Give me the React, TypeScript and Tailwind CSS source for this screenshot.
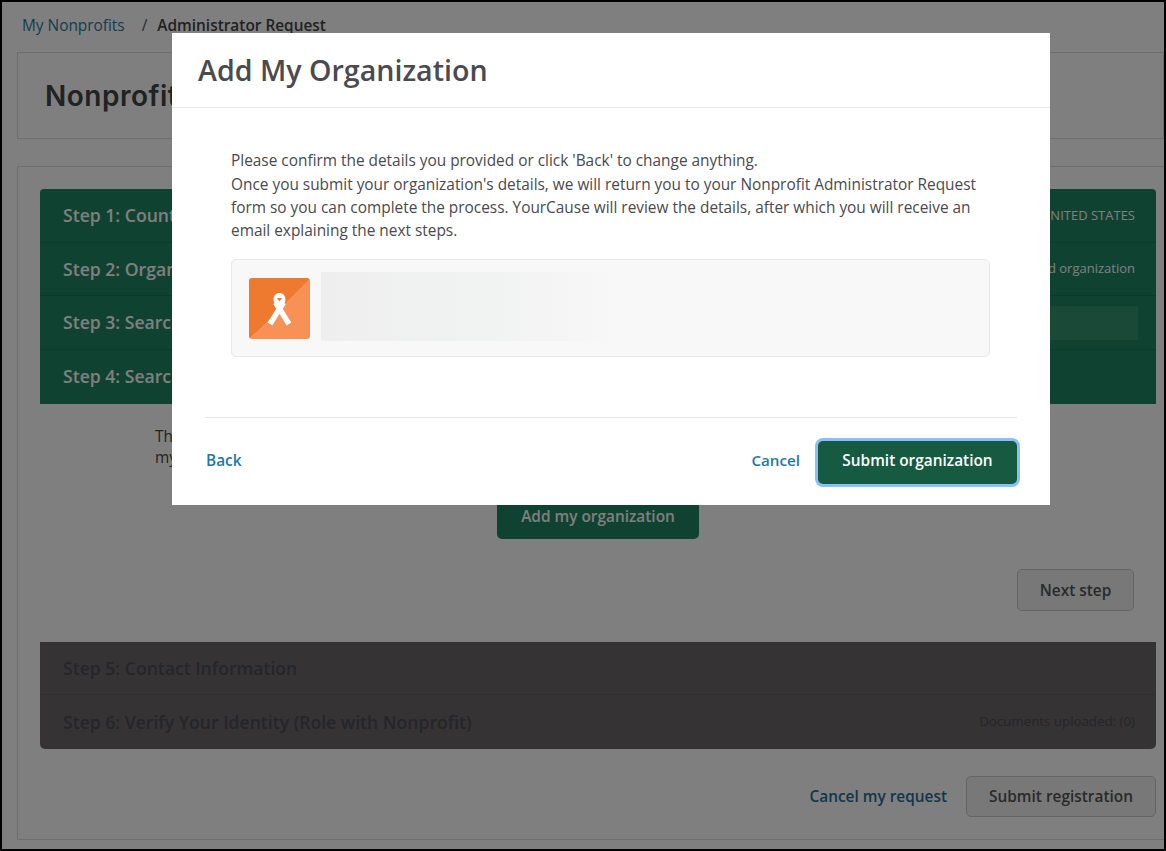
import React from 'react';

const font = "font-['Open_Sans',sans-serif]";

const StepRow: React.FC<{ title: string; right?: React.ReactNode; className?: string }> = ({ title, right, className = '' }) => (
  <div className={`flex items-center justify-between pl-[23px] pr-[21px] ${className}`}>
    <span className="text-[17.6px] font-semibold whitespace-nowrap">{title}</span>
    {right}
  </div>
);

const RibbonIcon: React.FC = () => (
  <div className="w-[61px] h-[61px] mt-px shrink-0 rounded-[3px] bg-[linear-gradient(135deg,#ee7a2f_50%,#f89155_50%)] flex items-center justify-center">
    <svg width="61" height="61" viewBox="0 0 61 61" fill="none">
      <path d="M21 46 L34.4 24.5 M40 46 L26.6 24.5" stroke="#fff" strokeWidth="5.4" />
      <path d="M24.6 21.5 C24.6 17.5 27 15 30.5 15 C34 15 36.4 17.5 36.4 21.5 C36.4 24 35.5 26 33.5 28 L27.5 28 C25.5 26 24.6 24 24.6 21.5 Z" fill="#fff" />
      <path d="M28 20h5l-2.5 3.4z" fill="#ee7a2f" />
    </svg>
  </div>
);

const App: React.FC = () => {
  return (
    <div className={`${font} relative w-[1166px] h-[851px] overflow-hidden bg-white text-[#333]`}>
      {/* Page behind the dialog */}
      <div className="h-full flex flex-col border-2 border-black">
        <div className="h-[50px] pl-[20px] pt-[14px] flex items-start text-[15.4px] leading-[20px] whitespace-nowrap">
          <span className="text-[#2a7a9f]">My Nonprofits</span>
          <span className="ml-[17px] text-[#555]">/</span>
          <span className="ml-[10px] font-semibold text-[#444]">Administrator Request</span>
        </div>

        <div className="ml-[15px] h-[87px] border border-[#ddd] flex items-center pl-[27px] mb-[27px]">
          <h1 className="font-['Inter',sans-serif] text-[28px] font-semibold text-[#444] tracking-[0.5px]">Nonprofit</h1>
        </div>

        <div className="ml-[15px] h-[674px] border-t border-l border-b border-[#ddd] pl-[22px] pr-[8px] pt-[22px] flex flex-col">
          <div className="h-[215px] rounded-t-[4px] bg-[#1f8560] text-white flex flex-col">
            <StepRow title="Step 1: Country" className="h-[54px] border-b border-[#1a7554]" right={<span className="text-[13px]">UNITED STATES</span>} />
            <StepRow title="Step 2: Organization" className="h-[53px] border-b border-[#1a7554]" right={<span className="text-[13px]">Add organization</span>} />
            <StepRow
              title="Step 3: Search"
              className="h-[54px] border-b border-[#1a7554] !pr-[18px]"
              right={<div className="w-[300px] h-[34px] bg-[#37936f]" />}
            />
            <StepRow title="Step 4: Search" className="h-[54px] pb-[2px]" />
          </div>

          <div className="pl-[115px] pt-[22px] text-[15.4px] leading-[21px] text-[#444] h-[238px]">
            <p>The</p>
            <p>my</p>
            <div className="flex justify-center ml-[-115px] mt-[25px] mb-[30px]">
              <button className="w-[202px] h-[46px] rounded-b-[5px] bg-[#1f8560] text-white text-[15.4px] font-semibold">Add my organization</button>
            </div>
            <div className="flex justify-end pr-[22px]">
              <button className="w-[117px] h-[42px] rounded-[5px] border border-[#c9c9c9] bg-[#f0f0f0] text-[#555] text-[15.4px] font-semibold">Next step</button>
            </div>
          </div>

          <div className="h-[107px] rounded-b-[5px] bg-[#6c6668] text-[#4a4c52] flex flex-col">
            <StepRow title="Step 5: Contact Information" className="h-[53px] border-b border-[#625c5e]" />
            <StepRow title="Step 6: Verify Your Identity (Role with Nonprofit)" className="h-[54px]" right={<span className="text-[13.3px]">Documents uploaded: (0)</span>} />
          </div>

          <div className="flex justify-end items-center gap-[19px] mt-[27px]">
            <span className="text-[15.4px] font-semibold text-[#236f96]">Cancel my request</span>
            <button className="w-[190px] h-[41px] rounded-[5px] border border-[#c9c9c9] bg-[#f0f0f0] text-[#555] text-[15.4px] font-semibold">Submit registration</button>
          </div>
        </div>
      </div>

      {/* Backdrop */}
      <div className="absolute inset-0 bg-black/50" />

      {/* Dialog */}
      <div className="absolute left-[172px] top-[33px] w-[878px] h-[472px] bg-white flex flex-col text-[#4a4a4f]">
        <div className="h-[75px] border-b border-[#e8e8e8] pl-[26px] flex items-center shrink-0">
          <h2 className="text-[28.6px] font-semibold text-[#4a4a4f]">Add My Organization</h2>
        </div>

        <div className="px-[59px] pt-[41.4px] text-[15.4px] leading-[23.3px] flex-1">
          <p className="w-[759px]">
            Please confirm the details you provided or click 'Back' to change anything.<br />
            Once you submit your organization's details, we will return you to your Nonprofit Administrator Request form so you can complete the process. YourCause will review the details, after which you will receive an email explaining the next steps.
          </p>
          <div className="mt-[16.4px] w-[759px] h-[98px] rounded-[5px] border border-[#e8e8e8] bg-[#f8f8f8] flex items-center pl-[17px]">
            <RibbonIcon />
            <div className="ml-[11px] mt-[-3px] w-[291px] h-[69px] bg-[linear-gradient(90deg,#eeeeee,#f1f3f2_55%,#f4f5f4_85%,#f8f8f8)]" />
          </div>
        </div>

        <div className="mx-[33px] h-[88px] border-t border-[#e8e8e8] flex items-center justify-between shrink-0">
          <span className="text-[15.4px] font-semibold text-[#1f78a4] ml-px mb-[2px]">Back</span>
          <div className="flex items-center gap-[15px]">
            <span className="text-[15.2px] font-semibold text-[#1f78a4] mb-[2px]">Cancel</span>
            <button className="w-[205px] h-[49px] mr-[-3px] mt-px rounded-[8px] border-[3px] border-[#8ac0f8] bg-[#165a42] text-white text-[15.4px] font-semibold pb-[3px]">Submit organization</button>
          </div>
        </div>
      </div>
    </div>
  );
};

export default App;
